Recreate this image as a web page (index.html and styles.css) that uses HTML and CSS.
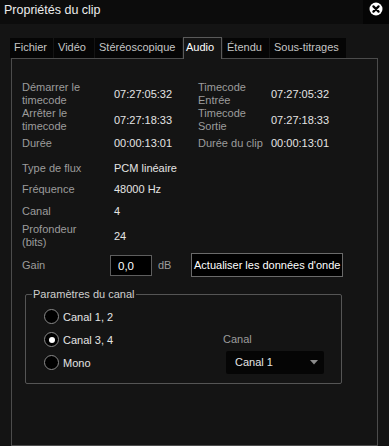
FILE: index.html
```html
<!DOCTYPE html>
<html lang="fr">
<head>
  <meta charset="UTF-8">
  <title>Propriétés du clip</title>
  <link rel="stylesheet" href="styles.css">
</head>
<body>

  <div class="window">
    <div class="titlebar">
      <span class="title">Propriétés du clip</span>
      <div class="close">
        <svg width="14" height="14" viewBox="-7 -7 14 14">
          <circle r="6.5" fill="#fff"/>
          <path d="M-2.6 -2.6 L2.6 2.6 M2.6 -2.6 L-2.6 2.6" stroke="#000" stroke-width="2.2" stroke-linecap="round"/>
        </svg>
      </div>
    </div>

    <div class="tabs">
      <div class="tab t-file">Fichier</div>
      <div class="tab t-video">Vidéo</div>
      <div class="tab t-stereo">Stéréoscopique</div>
      <div class="tab t-audio active">Audio</div>
      <div class="tab t-ext">Étendu</div>
      <div class="tab t-sub">Sous-titrages</div>
    </div>

    <div class="panel">
      <div class="info">
        <div class="label">Démarrer le<br>timecode</div>
        <div class="value">07:27:05:32</div>
        <div class="label">Timecode<br>Entrée</div>
        <div class="value">07:27:05:32</div>

        <div class="label">Arrêter le<br>timecode</div>
        <div class="value">07:27:18:33</div>
        <div class="label">Timecode<br>Sortie</div>
        <div class="value">07:27:18:33</div>

        <div class="label">Durée</div>
        <div class="value">00:00:13:01</div>
        <div class="label">Durée du clip</div>
        <div class="value">00:00:13:01</div>
      </div>

      <div class="info info-single">
        <div class="label">Type de flux</div>
        <div class="value">PCM linéaire</div>
        <div class="label">Fréquence</div>
        <div class="value">48000 Hz</div>
        <div class="label">Canal</div>
        <div class="value">4</div>
        <div class="label">Profondeur<br>(bits)</div>
        <div class="value">24</div>
      </div>

      <div class="gain-row">
        <span class="label gain-label">Gain</span>
        <div class="gain-input">0,0</div>
        <span class="label unit">dB</span>
        <button class="wave-btn">Actualiser les données d'onde</button>
      </div>

      <fieldset class="channels">
        <legend>Paramètres du canal</legend>
        <div class="radios">
          <div class="radio-row"><span class="radio"></span>Canal 1, 2</div>
          <div class="radio-row"><span class="radio checked"></span>Canal 3, 4</div>
          <div class="radio-row"><span class="radio"></span>Mono</div>
        </div>
        <div class="channel-pick">
          <div class="label">Canal</div>
          <div class="select">
            <span>Canal 1</span>
            <svg width="8" height="5" viewBox="0 0 8 5"><path d="M0 0 H8 L4 4.5 Z" fill="#8c8c8c"/></svg>
          </div>
        </div>
      </fieldset>
    </div>
  </div>

</body>
</html>
```

FILE: styles.css
```css
:root {
  --bg: #141414;
  --dark: #050505;
  --line: #4c4c4c;
  --label: #9c9c9c;
  --text: #e4e4e4;
}

body {
  margin: 0;
  background: var(--bg);
  font-family: 'Liberation Sans', Arial, sans-serif;
  font-size: 11px;
  color: var(--text);
}

.window {
  width: 389px;
  height: 446px;
  overflow: hidden;
}

.titlebar {
  display: flex;
  height: 24px;
  background: #0c0c0c;
}

.title {
  flex: 1;
  padding-left: 4px;
  line-height: 21px;
  font-size: 12.5px;
  color: #ececec;
}

.close {
  width: 26px;
  display: flex;
  justify-content: center;
  padding-top: 2px;
  box-sizing: border-box;
  background: var(--dark);
}

/* tab strip */
.tabs {
  display: flex;
  align-items: flex-end;
  gap: 1px;
  margin-top: 13px;
  padding-left: 10px;
  height: 21px;
}

.tab {
  height: 20px;
  line-height: 19px;
  padding-left: 4px;
  box-sizing: border-box;
  background: var(--dark);
  color: #c4c4c4;
  white-space: nowrap;
}

.t-file { width: 43px; }
.t-video { width: 40px; }
.t-stereo { width: 87px; }
.t-audio { width: 39px; }
.t-ext { width: 46px; }
.t-sub { width: 76px; }

.tab.active {
  position: relative;
  z-index: 1;
  height: 22px;
  margin-bottom: -1px;
  background: var(--bg);
  border: 1px solid #5a5a5a;
  border-bottom: none;
  padding-left: 2px;
  color: #fff;
}

.panel {
  margin: 0 11px;
  height: 388px;
  box-sizing: border-box;
  border: 1px solid var(--line);
  padding: 22px 0 0 10px;
}

.info {
  display: grid;
  grid-template-columns: 92px 84px 73px 1fr;
  grid-template-rows: 26px 26px 20px;
  align-items: center;
  line-height: 13px;
}

.info-single {
  grid-template-columns: 92px 1fr;
  grid-template-rows: 20px 22px 23px 26px;
  margin-top: 5px;
}

.label {
  color: var(--label);
}

.value {
  color: var(--text);
}

.gain-row {
  display: flex;
  align-items: center;
  height: 24px;
  margin-top: 4px;
}

.gain-label {
  width: 88px;
}

.gain-input {
  width: 42px;
  height: 21px;
  box-sizing: border-box;
  border: 1px solid #5e5e5e;
  background: #000;
  padding: 4px 0 0 7px;
  font-size: 11.5px;
  color: #fff;
}

.unit {
  margin-left: 6px;
  width: 33px;
}

.wave-btn {
  height: 24px;
  padding: 0 2px;
  border: 1px solid #6a6a6a;
  background: #000;
  color: #fff;
  font-family: inherit;
  font-size: 11px;
}

/* channel group */
.channels {
  display: flex;
  width: 317px;
  box-sizing: border-box;
  margin: 10px 0 0 3px;
  padding: 3px 0 9px 18px;
  border: 1px solid #555;
  border-radius: 2px;
}

.channels legend {
  padding: 0 1px;
  margin-left: -12px;
  line-height: 15px;
  color: #cfcfcf;
}

.radios {
  width: 179px;
}

.radio-row {
  display: flex;
  align-items: center;
  height: 23px;
  color: var(--text);
}

.radio {
  width: 15px;
  height: 15px;
  box-sizing: border-box;
  margin-right: 4px;
  border: 1px solid #8a8a8a;
  border-radius: 50%;
  background: #000;
  display: flex;
  align-items: center;
  justify-content: center;
}

.radio.checked::after {
  content: "";
  width: 6px;
  height: 6px;
  border-radius: 50%;
  background: #fff;
}

.channel-pick {
  padding-top: 27px;
  line-height: 15px;
}

.select {
  display: flex;
  align-items: center;
  justify-content: space-between;
  width: 98px;
  height: 23px;
  box-sizing: border-box;
  margin: 4px 0 0 3px;
  padding: 0 6px 0 9px;
  background: var(--dark);
  border-radius: 2px;
  color: var(--text);
}
```
